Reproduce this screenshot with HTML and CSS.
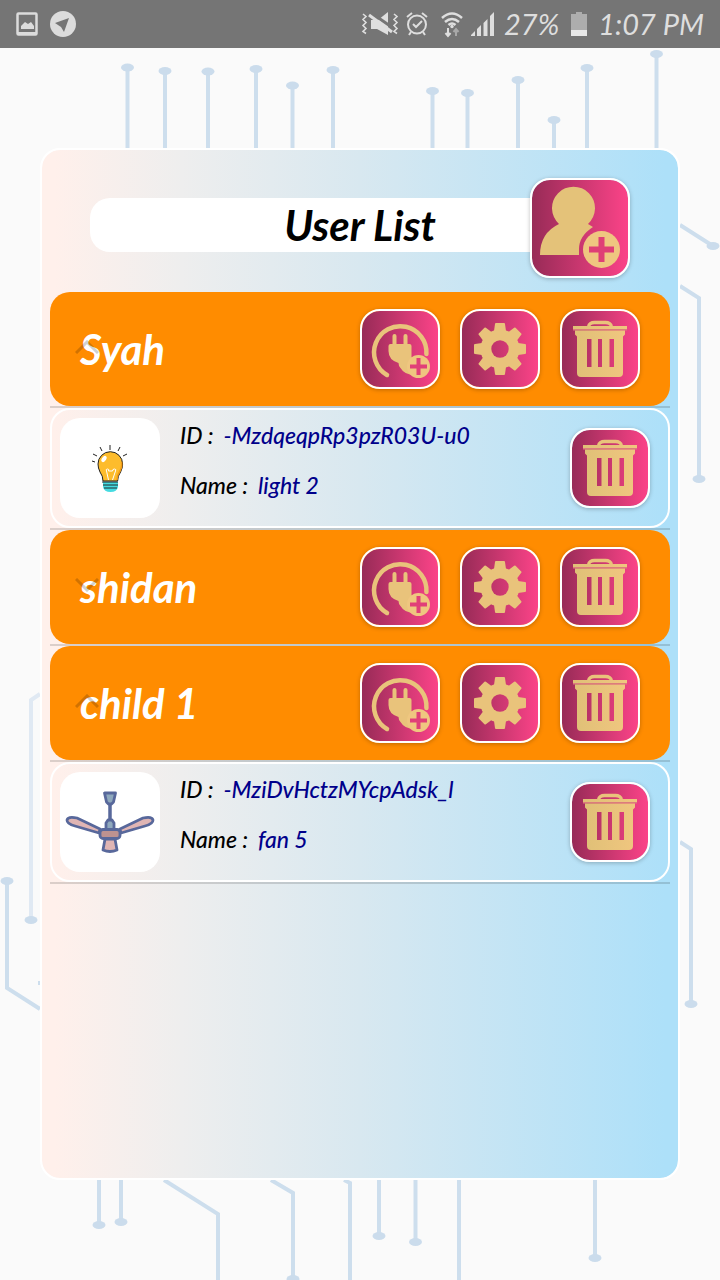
FILE: index.html
```
<!DOCTYPE html>
<html lang="en">
<head>
<meta charset="utf-8">
<meta name="viewport" content="width=device-width, initial-scale=1">
<title>User List</title>
<link rel="stylesheet" href="styles.css">
</head>
<body>
<svg class="defs" aria-hidden="true">
  <linearGradient id="gold" x1="0" x2="1" y1="0" y2="0"><stop offset="0" stop-color="#e0c077"/><stop offset="1" stop-color="#f0c67f"/></linearGradient>
  <symbol id="trash" viewBox="0 0 80 80">
    <path d="M28.500 18c0-3 3-4.500 6-4.500h11c3 0 6 1.500 6 4.500" fill="none" stroke="#e9c37b" stroke-width="3.500"/>
    <path d="M13 17h54v3H13z" fill="url(#gold)"/>
    <path d="M13 20h54v1.500H13z" fill="#dc7c7c"/>
    <path d="M15 21.500h50v4l-2 2V64q0 4-4 4H21q-4 0-4-4V27.500l-2-2zM27 30v28h4.500V30zM38 30v28h4V30zM49.500 30v28h4.500V30z" fill="url(#gold)" fill-rule="evenodd"/>
  </symbol>
  <symbol id="gear" viewBox="-40 -40 80 80">
    <mask id="gear-hole" maskUnits="userSpaceOnUse" x="-40" y="-40" width="80" height="80"><rect x="-40" y="-40" width="80" height="80" fill="#fff"/><circle r="8.700" fill="#000"/></mask>
    <g mask="url(#gear-hole)" fill="#e9c37b">
      <circle r="19.500"/>
      <path id="teeth" d="M-6-18l1-7q0-1 1-1h8q1 0 1 1l1 7V18l-1 7q0 1-1 1h-8q-1 0-1-1l-1-7z"/>
      <use href="#teeth" transform="rotate(45)"/><use href="#teeth" transform="rotate(90)"/><use href="#teeth" transform="rotate(135)"/>
    </g>
  </symbol>
  <symbol id="plug" viewBox="0 0 80 80">
    <path d="M27 66A26.200 26.200 0 1 1 66.400 45" fill="none" stroke="#e9c37b" stroke-width="4.500" stroke-linecap="round"/>
    <path d="M32.500 35v-8q0-2 2-2t2 2v8h7v-8q0-2 2-2t2 2v8h2q2 0 2 2v11l7 10-4 8q-10 0-14-7-2-2-2-5-10-3-10-12v-5q0-2 2-2z" fill="#e9c37b"/>
    <circle cx="58.500" cy="57.500" r="11.500" fill="#efc680"/>
    <path d="M58.500 49v17M50 57.500h17" stroke="#e13f78" stroke-width="4"/>
  </symbol>
</svg>

<svg class="circuit" viewBox="0 0 720 1280" preserveAspectRatio="none" aria-hidden="true">
  <g class="traces">
    <path d="M127.500 68v90M165 71v90M208 71v90M256 69v90M292.500 86v70M333 70v90M432.500 91v60M467.500 93v60M518 80v80M554 120v40M587 68v90M656.500 54v100"/>
    <path d="M680 225l33 21M680 286l19 12v181M680 842l11 7v155M99 1180v45M121 1180v42M164 1180l54 34v66M271 1180l22 13v86M344 1180l6 3v97M379 1180v56M415.500 1180v62M459 1180v100M595 1180v78"/>
    <path d="M7 881v107l33 21"/>
    <path class="faint" d="M40 694l-9 6v220"/>
    <path d="M38 983h4"/>
  </g>
  <g class="nodes">
    <ellipse cx="127.500" cy="67.500" rx="6.500" ry="4"/><ellipse cx="165" cy="71" rx="6.500" ry="4"/><ellipse cx="208" cy="71.500" rx="6.500" ry="4"/><ellipse cx="256" cy="69" rx="6.500" ry="4"/><ellipse cx="292.500" cy="85.500" rx="6.500" ry="4"/><ellipse cx="333" cy="70" rx="6.500" ry="4"/><ellipse cx="432.500" cy="91" rx="6.500" ry="4"/><ellipse cx="467.500" cy="93" rx="6.500" ry="4"/><ellipse cx="518" cy="80" rx="6.500" ry="4"/><ellipse cx="554" cy="120" rx="6.500" ry="4"/><ellipse cx="587" cy="68" rx="6.500" ry="4"/><ellipse cx="656.500" cy="54" rx="6.500" ry="4"/>
    <ellipse cx="713" cy="246" rx="6.500" ry="4"/><ellipse cx="699" cy="479" rx="6.500" ry="4"/><ellipse cx="691" cy="1004" rx="6.500" ry="4"/><ellipse cx="99" cy="1225" rx="6.500" ry="4"/><ellipse cx="121" cy="1222" rx="6.500" ry="4"/><ellipse cx="293" cy="1279" rx="6.500" ry="4"/><ellipse cx="379" cy="1236" rx="6.500" ry="4"/><ellipse cx="415.500" cy="1242" rx="6.500" ry="4"/><ellipse cx="595" cy="1258" rx="6.500" ry="4"/><ellipse cx="7" cy="881" rx="6.500" ry="4"/><ellipse cx="31" cy="920" rx="6.500" ry="4"/>
  </g>
</svg>

<header class="status">
  <svg class="status-left" width="64" height="28" viewBox="0 0 64 28" aria-hidden="true">
    <rect x="1.500" y="3.500" width="19" height="21" rx="1" fill="none" stroke="#dcdcdc" stroke-width="2.500"/>
    <path d="M2 22h18v3H2zM5 19v-3l4-4 3 2 3-2 3 4v3z" fill="#dcdcdc"/>
    <circle cx="47" cy="14" r="13" fill="#dcdcdc"/><path d="M39 13l14-5-5 14-3-5z" fill="#757575"/>
  </svg>
  <div class="status-right">
    <svg width="136" height="28" viewBox="0 0 136 28" fill="none" stroke="#dedede" aria-hidden="true">
      <path d="M2 4l3 2.500-3 3 3 3-3 3 3 3-3 3 3 2M33 4l3 2.500-3 3 3 3-3 3 3 3-3 3 3 2" stroke-width="1.600"/>
      <path d="M10 10h7l10-8v23l-11-6h-6z" fill="#dedede" stroke="none"/><path d="M9 2l23 16" stroke="#757575" stroke-width="3"/>
      <path d="M8 5l23 17" stroke-width="3"/>
      <circle cx="56" cy="14.500" r="9" stroke-width="2"/><path d="M52 14l3 3 6-6M46 7l5-4M66 7l-5-4M50 22l-2 3M62 22l2 3" stroke-width="2"/>
      <path d="M81 8q10-9 20 0M84 12q7-6 14 0M87.500 15q3.500-3 7 0" stroke-width="2.500"/><circle cx="91" cy="16.500" r="1.700" fill="#dedede" stroke="none"/>
      <path d="M87 18v8M84.500 23l2.500 3 2.500-3" stroke-width="2"/><path d="M95 26v-7M92.500 22l2.500-3 2.500 3" stroke="#a8a8a8" stroke-width="2"/>
      <path d="M110 26v-1l4-4v5zM116 26v-7l4-4v11zM122.500 26V13l4-4v17zM129 26V6l4-4v24z" fill="#dedede" stroke="none"/>
    </svg>
    <span class="percent">27%</span>
    <svg width="16" height="24" viewBox="0 0 16 24" aria-hidden="true"><path d="M0 2h5V0h6v2h5v22H0z" fill="#adadad"/><path d="M0 18h16v6H0z" fill="#e8e8e8"/></svg>
    <time>1:07 PM</time>
  </div>
</header>

<main class="panel">
  <header class="heading">
    <h1>User List</h1>
    <button class="tile tile-large" aria-label="Add user">
      <svg viewBox="0 0 100 100" aria-hidden="true"><path d="M29 46A21.500 21.500 0 1 1 58 46l5 3q-14 9-14 22v6H10q0-22 19-31z" fill="#e4c279"/><circle cx="71.500" cy="71.500" r="18.500" fill="#efc680"/><path d="M71.500 59v25M59 71.500h25" stroke="#df3f76" stroke-width="6"/></svg>
    </button>
  </header>

  <ul class="list">
    <li class="user">
      <div class="name"><h2>Syah</h2><svg class="chevron" viewBox="0 0 24 14" aria-hidden="true"><path d="M1 13L12 2l11 11"/></svg></div>
      <div class="actions">
        <button class="tile" aria-label="Add device for Syah"><svg viewBox="0 0 80 80"><use href="#plug"/></svg></button>
        <button class="tile" aria-label="Settings for Syah"><svg viewBox="0 0 80 80"><use href="#gear"/></svg></button>
        <button class="tile" aria-label="Delete Syah"><svg viewBox="0 0 80 80"><use href="#trash"/></svg></button>
      </div>
    </li>
    <li class="device">
      <svg class="thumb" viewBox="0 0 100 100" aria-hidden="true">
        <path d="M50 27v5M40 29l2 4M60 29l-2 4M33 36l4 2M67 36l-4 2M32 43l3 1" stroke="#222" fill="none"/>
        <path d="M43 63q0-5-3-9-2-4-2-8a12.300 12.300 0 0 1 24.600 0q0 4-2 8-3 4-3 9z" fill="#fdbc2c" stroke="#222"/>
        <path d="M61.500 44q1 4-1.500 9-3 4-3 9" stroke="#f29a16" stroke-width="1.500" fill="none"/>
        <ellipse cx="44" cy="41" rx="2" ry="3.500" fill="#fff" transform="rotate(35 44 41)"/>
        <path d="M48.500 62l-2-9q-1-2 1-2t1 2h4q0-2 2-2t1 2l-3 9" stroke="#fff" fill="none"/>
        <path d="M43 64h15v5q-1 5-7.500 5T43 69z" fill="#45dbe1"/><path d="M42 64h16M43 67h15M44 70h13" stroke="#202b2d"/>
      </svg>
      <dl>
        <div><dt>ID :</dt><dd>-MzdqeqpRp3pzR03U-u0</dd></div>
        <div><dt>Name :</dt><dd>light 2</dd></div>
      </dl>
      <button class="tile" aria-label="Delete light 2"><svg viewBox="0 0 80 80"><use href="#trash"/></svg></button>
    </li>
    <li class="user">
      <div class="name"><h2>shidan</h2><svg class="chevron" viewBox="0 0 24 14" aria-hidden="true"><path d="M1 1l11 11L23 1"/></svg></div>
      <div class="actions">
        <button class="tile" aria-label="Add device for shidan"><svg viewBox="0 0 80 80"><use href="#plug"/></svg></button>
        <button class="tile" aria-label="Settings for shidan"><svg viewBox="0 0 80 80"><use href="#gear"/></svg></button>
        <button class="tile" aria-label="Delete shidan"><svg viewBox="0 0 80 80"><use href="#trash"/></svg></button>
      </div>
    </li>
    <li class="user">
      <div class="name"><h2>child 1</h2><svg class="chevron" viewBox="0 0 24 14" aria-hidden="true"><path d="M1 13L12 2l11 11"/></svg></div>
      <div class="actions">
        <button class="tile" aria-label="Add device for child 1"><svg viewBox="0 0 80 80"><use href="#plug"/></svg></button>
        <button class="tile" aria-label="Settings for child 1"><svg viewBox="0 0 80 80"><use href="#gear"/></svg></button>
        <button class="tile" aria-label="Delete child 1"><svg viewBox="0 0 80 80"><use href="#trash"/></svg></button>
      </div>
    </li>
    <li class="device">
      <svg class="thumb" viewBox="0 0 100 100" stroke="#58689b" stroke-width="2.800" stroke-linejoin="round" aria-hidden="true">
        <path d="M50 32v16" stroke-width="3.500"/><path d="M44.500 21h11l-2 9-2 2h-3l-2-2zM46 58v-7l2-3h4l2 3v7z" fill="#8fa9bd"/>
        <path id="blade" d="M40 57L17 46q-9-2-10 2 0 4 8 6l24 7z" fill="#dfb5b4"/>
        <use href="#blade" transform="matrix(-1 0 0 1 100 0)"/>
        <path d="M45 67h10l2 11q-7 3-14 0z" fill="#dfb5b4"/>
        <rect x="40" y="57.500" width="20" height="9" rx="3" fill="#bd9290"/>
      </svg>
      <dl>
        <div><dt>ID :</dt><dd>-MziDvHctzMYcpAdsk_l</dd></div>
        <div><dt>Name :</dt><dd>fan 5</dd></div>
      </dl>
      <button class="tile" aria-label="Delete fan 5"><svg viewBox="0 0 80 80"><use href="#trash"/></svg></button>
    </li>
  </ul>
</main>
</body>
</html>
```
FILE: styles.css
```
* { box-sizing: border-box; }
body {
  margin: 0;
  min-height: 100vh;
  display: flex;
  flex-direction: column;
  position: relative;
  background: #fafafa;
  color: #000;
  font-family: Lato, "Open Sans", sans-serif;
  font-style: italic;
}
h1, h2, ul, dl, dd { margin: 0; padding: 0; }
svg { display: block; flex: none; }
.defs { position: absolute; width: 0; height: 0; }
.circuit { position: absolute; inset: 0; width: 100%; height: 100%; z-index: -1; }
.traces { fill: none; stroke: #cddeed; stroke-width: 4; }
.traces .faint { stroke: #e0e9f3; }
.nodes { fill: #cbdcec; }

.status {
  height: 48px;
  padding: 0 16px;
  display: flex;
  align-items: center;
  justify-content: space-between;
  background: #757575;
  color: #dedede;
  font-size: 29px;
  line-height: 48px;
}
.status-right { display: flex; align-items: center; gap: 7px; }
.percent { width: 60px; }
.status time { width: 110px; text-align: right; white-space: nowrap; }

.panel {
  flex: 1;
  margin: 100px 40px;
  padding: 0 8px;
  border: 2px solid #fff;
  border-radius: 20px;
  background: linear-gradient(90deg, #fff0eb 2%, #eeeeee 22%, #d8e8f0 50%, #ade0f9 98%) padding-box;
}
.heading {
  display: grid;
  align-items: center;
  padding: 28px 40px 14px;
}
.heading > * { grid-area: 1 / 1; }
.heading h1 {
  background: #fff;
  border-radius: 20px;
  font-size: 42px;
  line-height: 54px;
  text-align: center;
  margin-bottom: 6px;
}
.tile {
  width: 80px;
  height: 80px;
  flex: none;
  padding: 0;
  display: grid;
  border: 2px solid #fff;
  border-radius: 20px;
  background: linear-gradient(90deg, #982b57, #fb4388) padding-box;
  box-shadow: 0 1px 4px rgba(0, 0, 0, 0.25);
}
.tile svg { width: calc(100% + 4px); height: calc(100% + 4px); margin: -2px; }
.tile-large { width: 100px; height: 100px; justify-self: end; }

.list { list-style: none; }
.list li {
  position: relative;
  display: flex;
  align-items: center;
  margin-bottom: 2px;
  border-radius: 20px;
}
.list li::after {
  content: "";
  position: absolute;
  left: 0;
  right: 0;
  top: 100%;
  height: 2px;
  background: rgba(0, 0, 0, 0.14);
}
.user {
  padding: 17px 30px;
  justify-content: space-between;
  background: #ff8c00;
}
.name { position: relative; color: #fff; }
.name h2 { font-size: 42px; line-height: 48px; }
.chevron {
  position: absolute;
  left: -5px;
  top: 15px;
  width: 24px;
  height: 14px;
  fill: none;
  stroke: rgba(0, 0, 0, 0.18);
  stroke-width: 3;
}
.actions { display: flex; gap: 20px; }
.device { border: 2px solid #fff; padding: 0 18px 0 8px; height: 120px; }
.device::after { margin: 2px -2px 0; }
.thumb { width: 100px; height: 100px; margin-right: 20px; border-radius: 20px; background: #fff; }
.device dl { flex: 1; align-self: flex-start; font-size: 23px; line-height: 50px; font-weight: 500; }
.device dl div { display: flex; gap: 10px; }
.device dd { color: #00008b; }
```
